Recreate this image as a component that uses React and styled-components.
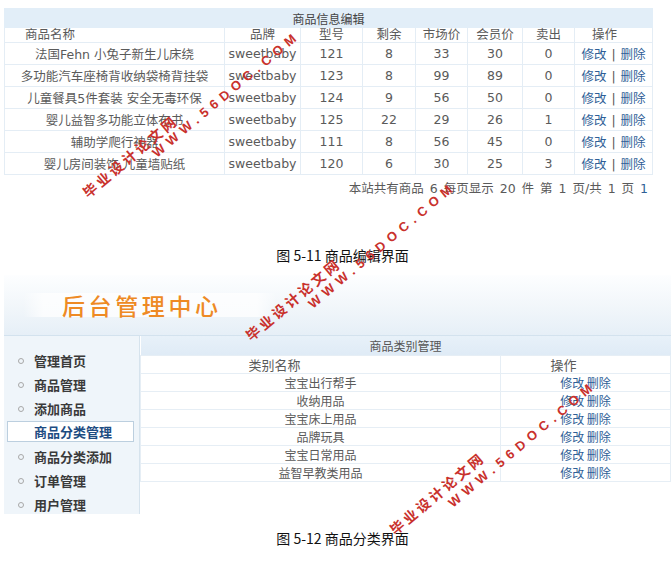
import React from 'react';
import styled, { createGlobalStyle } from 'styled-components';

const GlobalStyle = createGlobalStyle`
  html, body {
    margin: 0;
    padding: 0;
    background: #fff;
  }
  body {
    font-family: "DejaVu Sans", "Noto Sans CJK SC", sans-serif;
    color: #555;
  }
`;

const Page = styled.div`
  position: relative;
  width: 671px;
  height: 563px;
  overflow: hidden;
  background: #fff;
`;

/* ---------- figure 5-11: goods table ---------- */

const GoodsTable = styled.table`
  margin: 8px 0 0 4px;
  width: 648px;
  border-collapse: collapse;
  table-layout: fixed;
  font-size: 12.5px;
  color: #5a5a5a;
`;

const TitleCell = styled.th`
  height: 18px;
  padding: 0;
  background: #e2eef8;
  font-size: 12px;
  font-weight: normal;
  color: #444;
  text-align: center;
  border: 1px solid #e2eef8;
`;

const HeadCell = styled.th`
  height: 14px;
  padding: 0 ${p => p.$padR || 0}px 0 ${p => p.$padL || 0}px;
  font-size: 12.5px;
  line-height: 14px;
  font-weight: normal;
  color: #5a5a5a;
  text-align: ${p => p.$align || 'center'};
  border: 1px solid #e4edf5;
`;

const Cell = styled.td`
  height: 21px;
  padding: 0;
  text-align: center;
  white-space: nowrap;
  border: 1px solid #e4edf5;
`;

const Link = styled.a`
  color: #2f5f97;
  text-decoration: none;
`;

const Bar = styled.span`
  color: #555;
  margin: 0 5px;
`;

const Pager = styled.div`
  width: 648px;
  margin: 7px 0 0 0;
  text-align: right;
  font-size: 12.5px;
  line-height: 14px;
  word-spacing: 2px;
  color: #5a5a5a;
`;

const Caption = styled.div`
  text-align: center;
  font-family: "Noto Sans CJK SC", sans-serif;
  font-size: 14px;
  line-height: 16px;
  color: #111;
  margin-top: ${p => p.$top}px;
  padding-left: ${p => p.$shift || 0}px;
`;

/* ---------- figure 5-12: admin frame ---------- */

const Frame = styled.div`
  margin: 12px 0 0 4px;
  width: 667px;
`;

const Banner = styled.div`
  height: 61px;
  padding-top: 18px;
  box-sizing: border-box;
  background: linear-gradient(to bottom, #fdfeff 0%, #f1f6fa 55%, #e6eff7 100%);
  border-bottom: 1px solid #d3e2ee;
`;

const TitleBand = styled.div`
  margin-left: 19px;
  width: 254px;
  height: 24px;
  padding-left: 39px;
  box-sizing: border-box;
  display: flex;
  align-items: center;
  background: linear-gradient(to right, rgba(255,255,255,0) 0%, rgba(255,255,255,0.75) 8%, rgba(255,255,255,0.75) 92%, rgba(255,255,255,0) 100%);
`;

const BrandTitle = styled.h1`
  margin: 0;
  font-family: "Noto Sans CJK SC", sans-serif;
  font-size: 23px;
  font-weight: 500;
  letter-spacing: 3.6px;
  line-height: 28px;
  color: #ee8a24;
  white-space: nowrap;
`;

const Body = styled.div`
  display: grid;
  grid-template-columns: 136px 1fr;
  align-items: start;
`;

const Sidebar = styled.ul`
  margin: 0;
  padding: 12px 0 0 0;
  height: 178px;
  box-sizing: border-box;
  list-style: none;
  background: #eff5fa;
  border-right: 1px solid #d6e3ed;
`;

const NavItem = styled.li`
  position: relative;
  height: ${p => (p.$active ? 21 : 24)}px;
  margin: ${p => (p.$active ? '1px 5px 2px 3px' : '0')};
  padding-left: ${p => (p.$active ? 26 : 30)}px;
  box-sizing: border-box;
  display: flex;
  align-items: center;
  font-family: "Noto Sans CJK SC", sans-serif;
  font-size: 13px;
  font-weight: 700;
  color: ${p => (p.$active ? '#1d4c82' : '#3a3a3a')};
  background: ${p => (p.$active ? '#fff' : 'transparent')};
  border: ${p => (p.$active ? '1px solid #bccfdf' : 'none')};
`;

const Bullet = styled.span`
  position: absolute;
  left: 14px;
  top: 50%;
  width: 4px;
  height: 4px;
  margin-top: -2px;
  border: 1px solid #a8a8a8;
  border-radius: 50%;
`;

const Main = styled.div`
  height: 178px;
`;

const CatTable = styled.table`
  width: 100%;
  border-collapse: collapse;
  table-layout: fixed;
  font-family: "Noto Sans CJK SC", sans-serif;
  font-size: 12px;
  color: #5a5a5a;
`;

const CatTitle = styled.th`
  height: 19px;
  padding: 0;
  background: linear-gradient(to bottom, #e8f1f9, #dfebf6);
  font-weight: normal;
  font-size: 12px;
  color: #555;
  text-align: center;
`;

const CatHead = styled.th`
  height: 17px;
  padding: 0 ${p => p.$padR || 0}px 0 0;
  line-height: 17px;
  font-weight: normal;
  font-size: 13px;
  color: #5a5a5a;
  text-align: center;
  border: 1px solid #e6eef5;
`;

const CatCell = styled.td`
  height: 17px;
  padding: 0;
  line-height: 17px;
  text-align: center;
  border: 1px solid #e6eef5;
`;

/* ---------- watermark overlay ---------- */

const Mark = styled.span`
  position: absolute;
  left: ${p => p.$x}px;
  top: ${p => p.$y}px;
  font-family: "Liberation Sans", "Noto Sans CJK SC", sans-serif;
  font-weight: bold;
  font-size: ${p => p.$size}px;
  line-height: ${p => p.$size}px;
  letter-spacing: ${p => p.$gap}px;
  color: #c9312c;
  white-space: nowrap;
  transform: rotate(-40deg);
  transform-origin: 0 50%;
  pointer-events: none;
`;

const goods = [
  ['法国Fehn 小兔子新生儿床绕', 'sweetbaby', 121, 8, 33, 30, 0],
  ['多功能汽车座椅背收纳袋椅背挂袋', 'sweetbaby', 123, 8, 99, 89, 0],
  ['儿童餐具5件套装 安全无毒环保', 'sweetbaby', 124, 9, 56, 50, 0],
  ['婴儿益智多功能立体布书', 'sweetbaby', 125, 22, 29, 26, 1],
  ['辅助学爬行神器', 'sweetbaby', 111, 8, 56, 45, 0],
  ['婴儿房间装饰 儿童墙贴纸', 'sweetbaby', 120, 6, 30, 25, 3],
];

const cats = ['宝宝出行帮手', '收纳用品', '宝宝床上用品', '品牌玩具', '宝宝日常用品', '益智早教类用品'];

const menu = ['管理首页', '商品管理', '添加商品', '商品分类管理', '商品分类添加', '订单管理', '用户管理'];

const marks = [
  [85, 188, 154, 148],
  [248, 331, 310, 299],
  [392, 525, 450, 498],
];

export default function App() {
  return (
    <Page>
      <GlobalStyle />

      <GoodsTable>
        <colgroup>
          <col style={{ width: 220 }} />
          <col style={{ width: 76 }} />
          <col style={{ width: 62 }} />
          <col style={{ width: 53 }} />
          <col style={{ width: 52 }} />
          <col style={{ width: 55 }} />
          <col style={{ width: 52 }} />
          <col style={{ width: 78 }} />
        </colgroup>
        <thead>
          <tr>
            <TitleCell colSpan={8}>商品信息编辑</TitleCell>
          </tr>
          <tr>
            <HeadCell $align="left" $padL={20}>商品名称</HeadCell>
            <HeadCell>品牌</HeadCell>
            <HeadCell>型号</HeadCell>
            <HeadCell>剩余</HeadCell>
            <HeadCell>市场价</HeadCell>
            <HeadCell>会员价</HeadCell>
            <HeadCell>卖出</HeadCell>
            <HeadCell $padR={18}>操作</HeadCell>
          </tr>
        </thead>
        <tbody>
          {goods.map(g => (
            <tr key={g[0]}>
              {g.map((v, i) => (
                <Cell key={i}>{v}</Cell>
              ))}
              <Cell>
                <Link href="#">修改</Link>
                <Bar>|</Bar>
                <Link href="#">删除</Link>
              </Cell>
            </tr>
          ))}
        </tbody>
      </GoodsTable>

      <Pager>
        本站共有商品 6 每页显示 20 件 第 1 页/共 1 页 <Link href="#">1</Link>
      </Pager>

      <Caption $top={51} $shift={14}>图 5-11 商品编辑界面</Caption>

      <Frame>
        <Banner>
          <TitleBand>
            <BrandTitle>后台管理中心</BrandTitle>
          </TitleBand>
        </Banner>
        <Body>
          <Sidebar>
            {menu.map(m => {
              const active = m === '商品分类管理';
              return (
                <NavItem key={m} $active={active}>
                  {!active && <Bullet />}
                  {m}
                </NavItem>
              );
            })}
          </Sidebar>
          <Main>
            <CatTable>
              <colgroup>
                <col style={{ width: 360 }} />
                <col />
              </colgroup>
              <thead>
                <tr>
                  <CatTitle colSpan={2}>商品类别管理</CatTitle>
                </tr>
                <tr>
                  <CatHead $padR={92}>类别名称</CatHead>
                  <CatHead $padR={44}>操作</CatHead>
                </tr>
              </thead>
              <tbody>
                {cats.map(c => (
                  <tr key={c}>
                    <CatCell>{c}</CatCell>
                    <CatCell>
                      <Link href="#">修改</Link> <Link href="#">删除</Link>
                    </CatCell>
                  </tr>
                ))}
              </tbody>
            </CatTable>
          </Main>
        </Body>
      </Frame>

      <Caption $top={16} $shift={14}>图 5-12 商品分类界面</Caption>

      {marks.map(([ax, ay, bx, by], i) => (
        <React.Fragment key={i}>
          <Mark $x={ax} $y={ay} $size={14} $gap={3}>毕业设计论文网</Mark>
          <Mark $x={bx} $y={by} $size={13} $gap={5.5}>WWW.56DOC.COM</Mark>
        </React.Fragment>
      ))}
    </Page>
  );
}
